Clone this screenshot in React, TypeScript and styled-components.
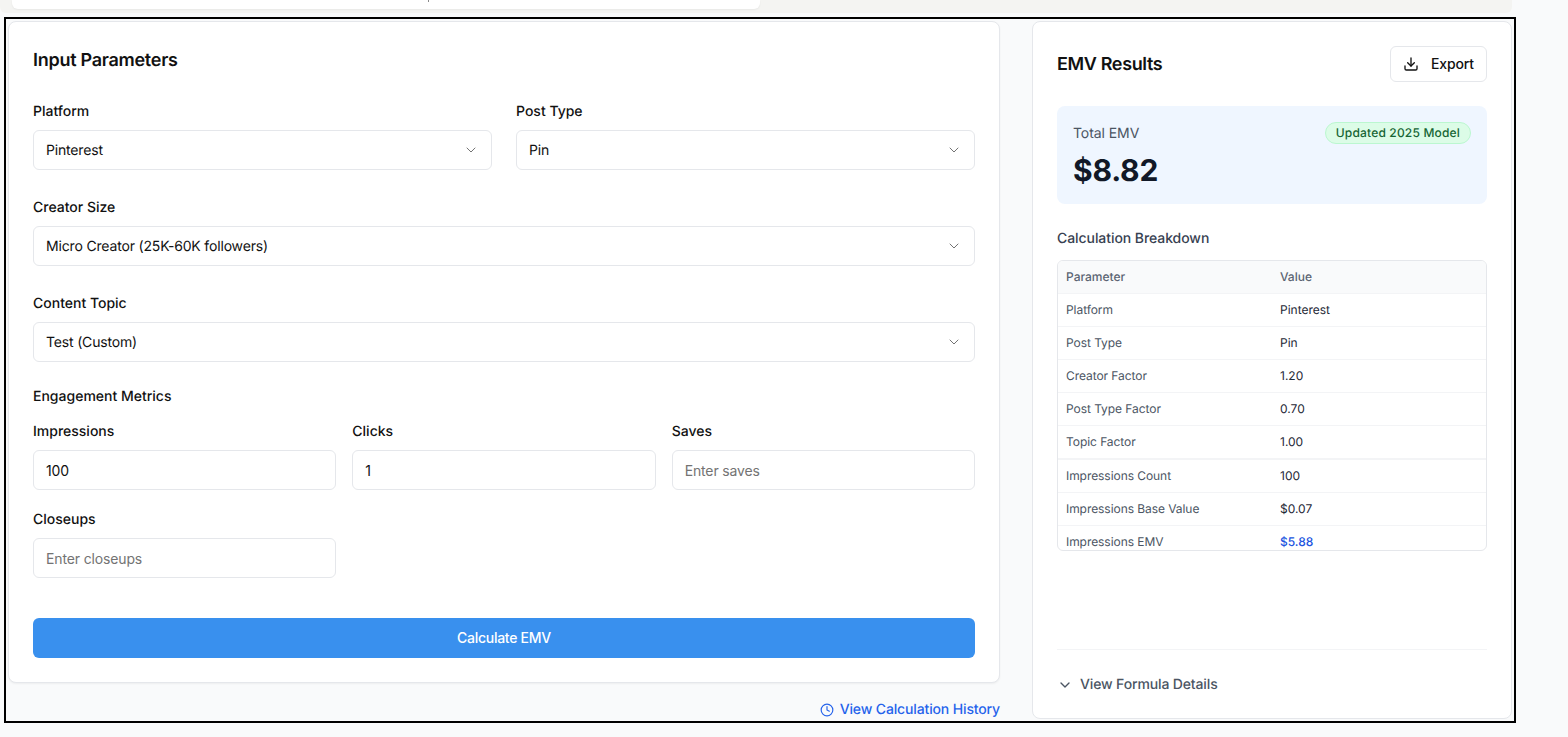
import React from "react";
import styled, { createGlobalStyle } from "styled-components";
import { ChevronDown, Clock, Download } from "lucide-react";

const GlobalStyle = createGlobalStyle`
  * {
    box-sizing: border-box;
  }
  html, body {
    margin: 0;
    background: #f9fafb;
    font-family: Inter, "Noto Sans", sans-serif;
    color: #111827;
    text-rendering: geometricPrecision;
  }
`;

const Page = styled.div`
  width: 1568px;
  height: 737px;
  overflow: hidden;
`;

const TopBand = styled.div`
  height: 13px;
  width: 1512px;
  padding-left: 12px;
  background: #f4f4f2;
  border-radius: 0 0 6px 6px;
`;

const TopCard = styled.div`
  width: 748px;
  height: 9px;
  padding-left: 416px;
  background: #fff;
  border-radius: 0 0 6px 6px;
  box-shadow: 0 1px 2px rgba(0, 0, 0, 0.05);
`;

const TopCardTail = styled.div`
  width: 1px;
  height: 2px;
  background: #8a8a8a;
`;

const Frame = styled.div`
  display: grid;
  grid-template-columns: 992px 480px;
  column-gap: 32px;
  align-items: start;
  width: 1512px;
  height: 706px;
  margin: 4px 0 0 4px;
  padding: 2px 0 0 2px;
  border: 2px solid #000;
`;

const LeftColumn = styled.div`
  display: flex;
  flex-direction: column;
  align-items: flex-end;
`;

const Card = styled.div`
  background: #fff;
  border: 1px solid #e5e7eb;
  border-radius: 8px;
`;

const InputCard = styled(Card)`
  width: 100%;
  height: 662px;
  padding: 23px 24px 24px;
  box-shadow: 0 1px 2px rgba(0, 0, 0, 0.05);
`;

const ResultCard = styled(Card)`
  display: flex;
  flex-direction: column;
  height: 698px;
  padding: 24px;
`;

const Heading = styled.h2`
  margin: 0;
  padding-top: 2px;
  font-size: 18px;
  line-height: 28px;
  font-weight: 600;
  letter-spacing: -0.015em;
  color: #111;
`;

const ResultHeading = styled(Heading)`
  letter-spacing: -0.02em;
`;

const Fields = styled.div`
  display: grid;
  grid-template-columns: 459px 459px;
  column-gap: 24px;
  row-gap: 28px;
  margin-top: 27px;
`;

const Field = styled.div<{ $wide?: boolean }>`
  grid-column: ${(p) => (p.$wide ? "1 / -1" : "auto")};
  min-width: 0;
`;

const Label = styled.label`
  display: block;
  margin-bottom: 8px;
  font-size: 14px;
  line-height: 20px;
  font-weight: 500;
  color: #111;
`;

const SelectBox = styled.div`
  display: flex;
  align-items: center;
  justify-content: space-between;
  height: 40px;
  padding: 0 12px;
  background: #fff;
  border: 1px solid #e5e7eb;
  border-radius: 6px;
  font-size: 14px;
  letter-spacing: -0.012em;
  color: #111;

  svg {
    color: #737373;
  }
`;

const SectionLabel = styled.div`
  margin-top: 25px;
  font-size: 14px;
  line-height: 20px;
  font-weight: 500;
  color: #111;
`;

const Metrics = styled.div`
  display: grid;
  grid-template-columns: repeat(3, 1fr);
  column-gap: 16px;
  row-gap: 20px;
  margin-top: 15px;
`;

const TextInput = styled.input`
  display: block;
  width: 100%;
  height: 40px;
  padding: 0 12px;
  background: #fff;
  border: 1px solid #e5e7eb;
  border-radius: 6px;
  outline: none;
  font-family: inherit;
  font-size: 14px;
  letter-spacing: -0.01em;
  color: #111;

  &::placeholder {
    color: #737373;
  }
`;

const SubmitButton = styled.button`
  display: block;
  width: 100%;
  height: 40px;
  margin-top: 40px;
  padding: 0 0 2px;
  background: #3990ee;
  border: 0;
  border-radius: 6px;
  font-family: inherit;
  font-size: 14px;
  font-weight: 500;
  letter-spacing: -0.02em;
  color: #fff;
`;

const HistoryLink = styled.a`
  display: flex;
  align-items: center;
  gap: 6px;
  margin-top: 17px;
  font-size: 14px;
  line-height: 20px;
  font-weight: 500;
  letter-spacing: -0.01em;
  color: #2563eb;
`;

const ResultHeader = styled.div`
  display: flex;
  align-items: center;
  justify-content: space-between;
  height: 36px;
`;

const ExportButton = styled.button`
  display: flex;
  align-items: center;
  gap: 12px;
  height: 36px;
  padding: 0 12px;
  background: #fff;
  border: 1px solid #e5e7eb;
  border-radius: 6px;
  font-family: inherit;
  font-size: 14px;
  font-weight: 500;
  letter-spacing: -0.01em;
  color: #111;

  span {
    margin-bottom: 2px;
  }
`;

const TotalBox = styled.div`
  height: 98px;
  margin-top: 24px;
  padding: 16px 16px 0;
  background: #eff6ff;
  border-radius: 8px;
`;

const TotalTop = styled.div`
  display: flex;
  align-items: center;
  justify-content: space-between;
  height: 22px;
`;

const TotalLabel = styled.span`
  font-size: 14px;
  letter-spacing: -0.005em;
  color: #4b5563;
`;

const Badge = styled.span`
  padding: 0 10px;
  height: 22px;
  line-height: 20px;
  background: #dcfce7;
  border: 1px solid #bbf7d0;
  border-radius: 999px;
  font-size: 12px;
  font-weight: 500;
  letter-spacing: 0.015em;
  color: #166534;
`;

const TotalValue = styled.div`
  margin-top: 9px;
  font-size: 30px;
  line-height: 36px;
  font-weight: 700;
  letter-spacing: -0.2px;
  color: #111827;
`;

const BreakdownTitle = styled.h3`
  margin: 25px 0 0;
  font-size: 14px;
  line-height: 20px;
  font-weight: 500;
  letter-spacing: -0.005em;
  color: #374151;
`;

const TableWrap = styled.div`
  height: 291px;
  margin-top: 11px;
  overflow: hidden;
  border: 1px solid #e5e7eb;
  border-radius: 6px;
`;

const Table = styled.table`
  width: 100%;
  border-collapse: collapse;
  table-layout: fixed;
  font-size: 12px;
`;

const HeadCell = styled.th<{ $width?: number }>`
  width: ${(p) => (p.$width ? `${p.$width}px` : "auto")};
  height: 32px;
  padding: 0 8px;
  background: #f9fafb;
  border-bottom: 1px solid #f3f4f6;
  text-align: left;
  font-weight: 500;
  color: #5b6472;
`;

const Row = styled.tr<{ $strong?: boolean }>`
  border-bottom: ${(p) => (p.$strong ? "2px solid #f3f4f6" : "1px solid #f3f4f6")};

  td {
    height: ${(p) => (p.$strong ? 34 : 33)}px;
  }
`;

const NameCell = styled.td`
  padding: 0 8px;
  letter-spacing: -0.005em;
  color: #4b5563;
`;

const ValueCell = styled.td<{ $accent?: boolean }>`
  padding: 0 8px;
  color: ${(p) => (p.$accent ? "#2154e0" : "#1f2937")};
  font-weight: ${(p) => (p.$accent ? 500 : 400)};
`;

const FormulaToggle = styled.div`
  display: flex;
  align-items: center;
  gap: 7px;
  margin: auto 0 -1px;
  padding-top: 25px;
  border-top: 1px solid #f3f4f6;
  font-size: 14px;
  line-height: 20px;
  font-weight: 500;
  letter-spacing: -0.01em;
  color: #4b5563;
`;

const breakdown = [
  { name: "Platform", value: "Pinterest" },
  { name: "Post Type", value: "Pin" },
  { name: "Creator Factor", value: "1.20" },
  { name: "Post Type Factor", value: "0.70" },
  { name: "Topic Factor", value: "1.00", strong: true },
  { name: "Impressions Count", value: "100" },
  { name: "Impressions Base Value", value: "$0.07" },
  { name: "Impressions EMV", value: "$5.88", accent: true },
];

const Select = ({ value }: { value: string }) => (
  <SelectBox>
    {value}
    <ChevronDown size={16} strokeWidth={1.5} />
  </SelectBox>
);

const App = () => {
  return (
    <Page>
      <GlobalStyle />
      <TopBand>
        <TopCard>
          <TopCardTail />
        </TopCard>
      </TopBand>
      <Frame>
        <LeftColumn>
          <InputCard>
            <Heading>Input Parameters</Heading>
            <Fields>
              <Field>
                <Label>Platform</Label>
                <Select value="Pinterest" />
              </Field>
              <Field>
                <Label>Post Type</Label>
                <Select value="Pin" />
              </Field>
              <Field $wide>
                <Label>Creator Size</Label>
                <Select value="Micro Creator (25K-60K followers)" />
              </Field>
              <Field $wide>
                <Label>Content Topic</Label>
                <Select value="Test (Custom)" />
              </Field>
            </Fields>
            <SectionLabel>Engagement Metrics</SectionLabel>
            <Metrics>
              <Field>
                <Label>Impressions</Label>
                <TextInput readOnly value="100" />
              </Field>
              <Field>
                <Label>Clicks</Label>
                <TextInput readOnly value="1" />
              </Field>
              <Field>
                <Label>Saves</Label>
                <TextInput readOnly placeholder="Enter saves" />
              </Field>
              <Field>
                <Label>Closeups</Label>
                <TextInput readOnly placeholder="Enter closeups" />
              </Field>
            </Metrics>
            <SubmitButton>Calculate EMV</SubmitButton>
          </InputCard>
          <HistoryLink>
            <Clock size={14} />
            View Calculation History
          </HistoryLink>
        </LeftColumn>
        <ResultCard>
          <ResultHeader>
            <ResultHeading>EMV Results</ResultHeading>
            <ExportButton>
              <Download size={16} />
              <span>Export</span>
            </ExportButton>
          </ResultHeader>
          <TotalBox>
            <TotalTop>
              <TotalLabel>Total EMV</TotalLabel>
              <Badge>Updated 2025 Model</Badge>
            </TotalTop>
            <TotalValue>$8.82</TotalValue>
          </TotalBox>
          <BreakdownTitle>Calculation Breakdown</BreakdownTitle>
          <TableWrap>
            <Table>
              <thead>
                <tr>
                  <HeadCell $width={214}>Parameter</HeadCell>
                  <HeadCell>Value</HeadCell>
                </tr>
              </thead>
              <tbody>
                {breakdown.map((row) => (
                  <Row key={row.name} $strong={row.strong}>
                    <NameCell>{row.name}</NameCell>
                    <ValueCell $accent={row.accent}>{row.value}</ValueCell>
                  </Row>
                ))}
              </tbody>
            </Table>
          </TableWrap>
          <FormulaToggle>
            <ChevronDown size={16} />
            View Formula Details
          </FormulaToggle>
        </ResultCard>
      </Frame>
    </Page>
  );
};

export default App;
